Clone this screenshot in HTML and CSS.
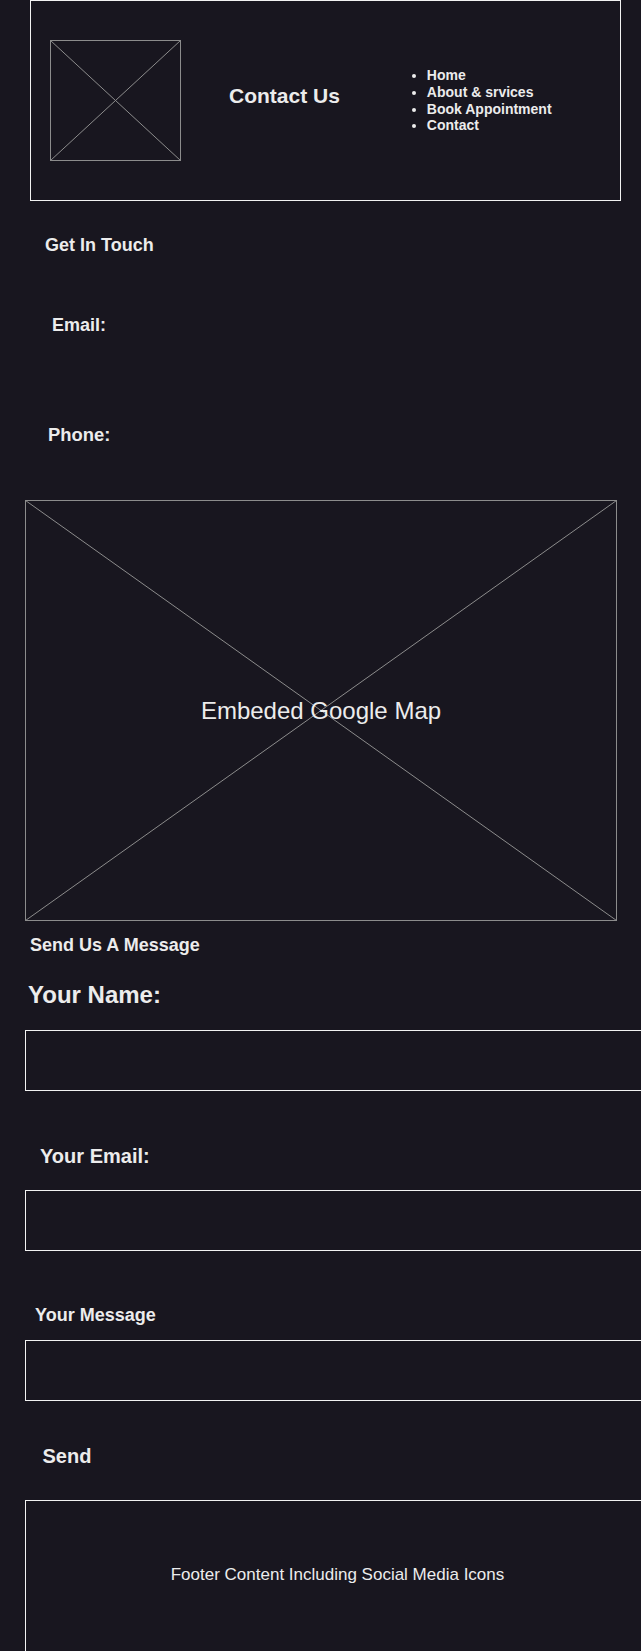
FILE: index.html
```html
<!DOCTYPE html>
<html lang="en">
<head>
<meta charset="utf-8">
<title>Contact Us</title>
<link rel="stylesheet" href="styles.css">
</head>
<body>
<div class="page">
  <header class="site-header">
    <div class="logo">
      <svg width="131" height="121" viewBox="0 0 131 121">
        <rect x="0.5" y="0.5" width="130" height="120" fill="none" stroke="#8c8c8c" stroke-width="1"/>
        <line x1="0.5" y1="0.5" x2="130.5" y2="120.5" stroke="#8c8c8c" stroke-width="1"/>
        <line x1="130.5" y1="0.5" x2="0.5" y2="120.5" stroke="#8c8c8c" stroke-width="1"/>
      </svg>
    </div>
    <h1 class="page-title">Contact Us</h1>
    <nav>
      <ul class="nav-list">
        <li>Home</li>
        <li>About &amp; srvices</li>
        <li>Book Appointment</li>
        <li>Contact</li>
      </ul>
    </nav>
  </header>

  <h3 class="touch-title">Get In Touch</h3>
  <p class="info info-email">Email:</p>
  <p class="info info-phone">Phone:</p>

  <div class="map">
    <svg width="592" height="421" viewBox="0 0 592 421">
      <rect x="0.5" y="0.5" width="591" height="420" fill="none" stroke="#8c8c8c" stroke-width="1"/>
      <line x1="0.5" y1="0.5" x2="591.5" y2="420.5" stroke="#8c8c8c" stroke-width="1"/>
      <line x1="591.5" y1="0.5" x2="0.5" y2="420.5" stroke="#8c8c8c" stroke-width="1"/>
    </svg>
    <span class="map-text">Embeded Google Map</span>
  </div>

  <h3 class="form-title">Send Us A Message</h3>
  <label class="label label-name" for="name">Your Name:</label>
  <input class="field field-name" id="name" type="text">
  <label class="label label-email" for="email">Your Email:</label>
  <input class="field field-email" id="email" type="text">
  <label class="label label-message" for="message">Your Message</label>
  <textarea class="field field-message" id="message"></textarea>
  <button class="send" type="button">Send</button>

  <footer class="site-footer">Footer Content Including Social Media Icons</footer>
</div>
</body>
</html>
```

FILE: styles.css
```css
html {
  overflow: hidden;
}

body {
  margin: 0;
  background: #18161f;
  color: #ececec;
  font-family: "Liberation Sans", Arial, sans-serif;
}

.page {
  display: flex;
  flex-direction: column;
  align-items: flex-start;
  padding-left: 25px;
}

/* Header */
.site-header {
  box-sizing: border-box;
  width: 591px;
  height: 201px;
  margin-left: 5px;
  border: 1px solid #f2f2f2;
  display: flex;
  align-items: center;
  padding-left: 19px;
}

.logo svg {
  display: block;
}

.page-title {
  margin: 0 0 10px 48px;
  font-size: 21px;
  line-height: 24px;
  font-weight: bold;
}

.nav-list {
  margin: 0 0 0 47px;
  padding-left: 40px;
  font-size: 14px;
  line-height: 16.67px;
  font-weight: bold;
  list-style: disc;
}

/* Get in touch */
.touch-title {
  margin: 34px 0 0 20px;
  font-size: 18px;
  line-height: 20px;
  font-weight: bold;
}

.info {
  font-weight: bold;
}

.info-email {
  margin: 60px 0 0 27px;
  font-size: 18px;
  line-height: 20px;
}

.info-phone {
  margin: 89px 0 0 23px;
  font-size: 18.4px;
  line-height: 21px;
}

/* Map */
.map {
  margin-top: 55px;
  width: 592px;
  height: 421px;
  display: grid;
  place-items: center;
}

.map > * {
  grid-area: 1 / 1;
}

.map svg {
  display: block;
}

.map-text {
  font-size: 24px;
  line-height: 28px;
}

/* Form */
.form-title {
  margin: 14px 0 0 5px;
  font-size: 18px;
  line-height: 20px;
  font-weight: bold;
}

.label {
  display: block;
  font-weight: bold;
}

.label-name {
  margin: 26px 0 0 3px;
  font-size: 24px;
  line-height: 27px;
}

.label-email {
  margin: 54px 0 0 15px;
  font-size: 20px;
  line-height: 22px;
}

.label-message {
  margin: 54px 0 0 10px;
  font-size: 18px;
  line-height: 20px;
}

.field {
  display: block;
  box-sizing: border-box;
  width: 625px;
  height: 61px;
  padding: 0;
  border: 1px solid #f2f2f2;
  background: transparent;
  color: #ececec;
  resize: none;
  outline: none;
}

.field-name {
  margin-top: 22px;
}

.field-email {
  margin-top: 23px;
}

.field-message {
  margin-top: 15px;
}

.send {
  margin: 44px 0 0 17.5px;
  padding: 0;
  border: 0;
  background: none;
  color: #ececec;
  font-family: "Liberation Sans", Arial, sans-serif;
  font-size: 20px;
  line-height: 23px;
  font-weight: bold;
}

/* Footer */
.site-footer {
  box-sizing: border-box;
  margin-top: 32px;
  width: 625px;
  height: 152px;
  padding-bottom: 2px;
  border: 1px solid #f2f2f2;
  display: flex;
  align-items: center;
  justify-content: center;
  font-size: 17px;
  line-height: 20px;
}
```
